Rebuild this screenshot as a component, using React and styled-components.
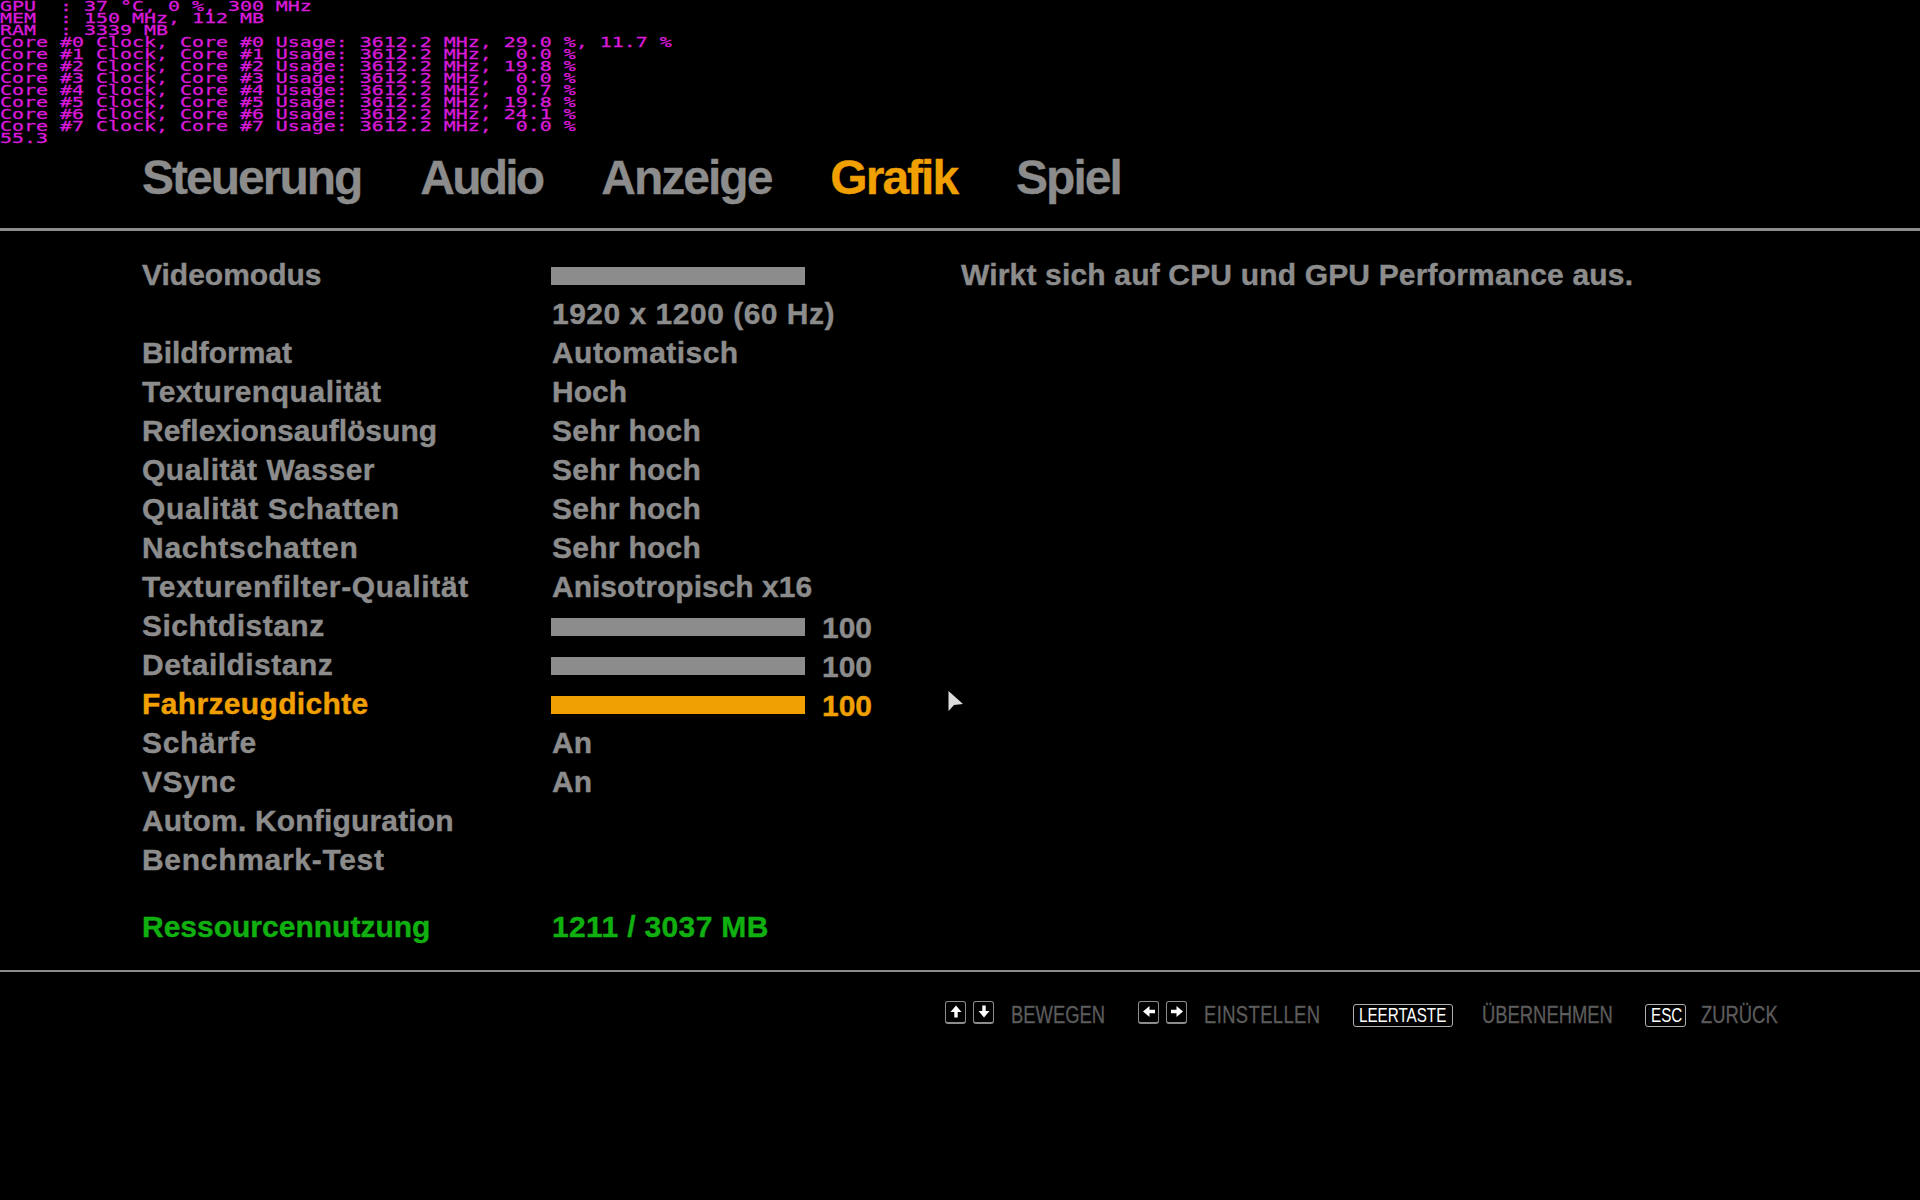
import React from "react";
import styled, { createGlobalStyle } from "styled-components";

const GlobalStyle = createGlobalStyle`
  html, body {
    margin: 0;
    background: #000;
  }
`;

const Screen = styled.div`
  position: relative;
  width: 1920px;
  height: 1200px;
  overflow: hidden;
  background: #000;
  font-family: "Liberation Sans", Arial, sans-serif;
`;

const Overlay = styled.pre`
  width: 500px;
  margin: 0;
  height: 144px;
  font-family: "DejaVu Sans Mono", monospace;
  font-size: 14px;
  line-height: 12px;
  color: #d81ad8;
  -webkit-text-stroke: 0.3px currentColor;
  transform: scaleX(1.423);
  transform-origin: left top;
`;

const TabBar = styled.nav`
  display: flex;
  gap: 59px;
  height: 87px;
  padding-left: 142px;
  box-sizing: border-box;
  align-items: flex-start;
  border-bottom: 3px solid #8c8c8c;
`;

const Tab = styled.span`
  font-size: 48px;
  line-height: 56px;
  margin-top: 6px;
  font-weight: 700;
  letter-spacing: ${(p) => p.$spacing}px;
  -webkit-text-stroke: 0.3px currentColor;
  color: ${(p) => (p.$active ? "#f0a000" : "#8c8c8c")};
`;

const Main = styled.main`
  display: flex;
  height: 741px;
  padding: 24px 0 0 142px;
  box-sizing: border-box;
  border-bottom: 2px solid #8c8c8c;
`;

const Options = styled.div`
  width: 819px;
`;

const Row = styled.div`
  display: flex;
  align-items: center;
  height: 39px;
  font-size: 30px;
  font-weight: 700;
  white-space: nowrap;
  -webkit-text-stroke: 0.4px currentColor;
  color: ${(p) => p.$color || "#8c8c8c"};
  margin-top: ${(p) => (p.$spaced ? "28px" : "0")};
`;

const Label = styled.span`
  width: 409px;
  letter-spacing: ${(p) => p.$spacing || 0}px;
`;

const Value = styled.span`
  margin-left: 1px;
  letter-spacing: ${(p) => p.$spacing || 0}px;
`;

const Bar = styled.span`
  width: 254px;
  height: 18px;
  margin-top: 3px;
  background: currentColor;
`;

const BarValue = styled.span`
  margin: 5px 0 0 17px;
`;

const Description = styled.p`
  margin: 0;
  font-size: 30px;
  font-weight: 700;
  line-height: 39px;
  letter-spacing: 0.17px;
  -webkit-text-stroke: 0.4px currentColor;
  color: #8c8c8c;
`;

const Footer = styled.footer`
  display: flex;
  justify-content: flex-end;
  align-items: center;
  padding: 30px 144px 0 0;
`;

const Hint = styled.div`
  display: flex;
  align-items: center;
  margin-left: ${(p) => p.$gap}px;
`;

const ArrowKey = styled.span`
  display: flex;
  align-items: center;
  justify-content: center;
  box-sizing: border-box;
  width: 21px;
  height: 23px;
  margin: -7px 7px 0 0;
  border: 1px solid #8c8c8c;
  border-bottom-width: 2px;
  border-radius: 3px;
`;

const TextKey = styled.span`
  display: flex;
  align-items: center;
  box-sizing: border-box;
  width: ${(p) => p.$width}px;
  height: 23px;
  padding-left: 5px;
  border: 1px solid #b0b0b0;
  border-radius: 3px;
  color: #fff;
  font-size: 20px;
  white-space: nowrap;
`;

const KeyText = styled.span`
  display: block;
  transform: scaleX(0.76);
  transform-origin: left center;
`;

const HintLabel = styled.span`
  display: block;
  width: ${(p) => p.$width}px;
  margin-left: ${(p) => p.$gap}px;
  font-size: 23px;
  letter-spacing: ${(p) => p.$spacing || 0}px;
  -webkit-text-stroke: 0.3px currentColor;
  color: #5c5c5c;
  white-space: nowrap;
  transform: scaleX(0.8);
  transform-origin: left center;
`;

const Cursor = styled.svg`
  position: absolute;
  left: 948px;
  top: 690px;
`;

const debugLines = `GPU  : 37 °C, 0 %, 300 MHz
MEM  : 150 MHz, 112 MB
RAM  : 3339 MB
Core #0 Clock, Core #0 Usage: 3612.2 MHz, 29.0 %, 11.7 %
Core #1 Clock, Core #1 Usage: 3612.2 MHz,  0.0 %
Core #2 Clock, Core #2 Usage: 3612.2 MHz, 19.8 %
Core #3 Clock, Core #3 Usage: 3612.2 MHz,  0.0 %
Core #4 Clock, Core #4 Usage: 3612.2 MHz,  0.7 %
Core #5 Clock, Core #5 Usage: 3612.2 MHz, 19.8 %
Core #6 Clock, Core #6 Usage: 3612.2 MHz, 24.1 %
Core #7 Clock, Core #7 Usage: 3612.2 MHz,  0.0 %
55.3`;

const tabs = [
  { name: "Steuerung", spacing: -2 },
  { name: "Audio", spacing: -2.8 },
  { name: "Anzeige", spacing: -2 },
  { name: "Grafik", spacing: -2 },
  { name: "Spiel", spacing: -2 },
];

// spacing values make up for the width difference to the game's font
const rows = [
  { label: "Videomodus", bar: true },
  { label: "", value: "1920 x 1200 (60 Hz)", vs: 0.5 },
  { label: "Bildformat", value: "Automatisch", vs: 0.45 },
  { label: "Texturenqualität", ls: 0.53, value: "Hoch" },
  { label: "Reflexionsauflösung", value: "Sehr hoch", vs: 0.27 },
  { label: "Qualität Wasser", ls: 0.49, value: "Sehr hoch", vs: 0.27 },
  { label: "Qualität Schatten", ls: 0.65, value: "Sehr hoch", vs: 0.27 },
  { label: "Nachtschatten", ls: 0.75, value: "Sehr hoch", vs: 0.27 },
  { label: "Texturenfilter-Qualität", ls: 0.69, value: "Anisotropisch x16" },
  { label: "Sichtdistanz", ls: 0.5, bar: true, value: "100" },
  { label: "Detaildistanz", ls: 0.47, bar: true, value: "100" },
  { label: "Fahrzeugdichte", ls: 0.35, bar: true, value: "100", color: "#f0a000" },
  { label: "Schärfe", ls: 0.7, value: "An" },
  { label: "VSync", ls: 0.5, value: "An" },
  { label: "Autom. Konfiguration", ls: 0.18 },
  { label: "Benchmark-Test", ls: 0.7 },
  { label: "Ressourcennutzung", value: "1211 / 3037 MB", vs: 0.35, color: "#10b010", spaced: true },
];

const Arrow = ({ rotate }) => (
  <svg width="12" height="13" viewBox="0 0 12 13" style={{ transform: `rotate(${rotate}deg)` }}>
    <path d="M6 0.5 L11.5 7 H7.7 V12.5 H4.3 V7 H0.5 Z" fill="#fff" />
  </svg>
);

export default function App() {
  return (
    <Screen>
      <GlobalStyle />
      <Overlay>{debugLines}</Overlay>
      <TabBar>
        {tabs.map((t) => (
          <Tab key={t.name} $spacing={t.spacing} $active={t.name === "Grafik"}>{t.name}</Tab>
        ))}
      </TabBar>
      <Main>
        <Options>
          {rows.map((r, i) => (
            <Row key={i} $color={r.color} $spaced={r.spaced}>
              <Label $spacing={r.ls}>{r.label}</Label>
              {r.bar ? (
                <>
                  <Bar />
                  {r.value && <BarValue>{r.value}</BarValue>}
                </>
              ) : (
                <Value $spacing={r.vs}>{r.value}</Value>
              )}
            </Row>
          ))}
        </Options>
        <Description>Wirkt sich auf CPU und GPU Performance aus.</Description>
      </Main>
      <Footer>
        <Hint $gap={0}>
          <ArrowKey><Arrow rotate={0} /></ArrowKey>
          <ArrowKey><Arrow rotate={180} /></ArrowKey>
          <HintLabel $width={92} $gap={10}>BEWEGEN</HintLabel>
        </Hint>
        <Hint $gap={35}>
          <ArrowKey><Arrow rotate={270} /></ArrowKey>
          <ArrowKey><Arrow rotate={90} /></ArrowKey>
          <HintLabel $width={117} $gap={10} $spacing={0.5}>EINSTELLEN</HintLabel>
        </Hint>
        <Hint $gap={32}>
          <TextKey $width={100}><KeyText>LEERTASTE</KeyText></TextKey>
          <HintLabel $width={131} $gap={29}>ÜBERNEHMEN</HintLabel>
        </Hint>
        <Hint $gap={32}>
          <TextKey $width={41}><KeyText>ESC</KeyText></TextKey>
          <HintLabel $width={75} $gap={15}>ZURÜCK</HintLabel>
        </Hint>
      </Footer>
      <Cursor width="16" height="22" viewBox="0 0 16 22">
        <path d="M0.5 1 L15 14 L6 15 L0.5 21 Z" fill="#dcdcdc" />
      </Cursor>
    </Screen>
  );
}
